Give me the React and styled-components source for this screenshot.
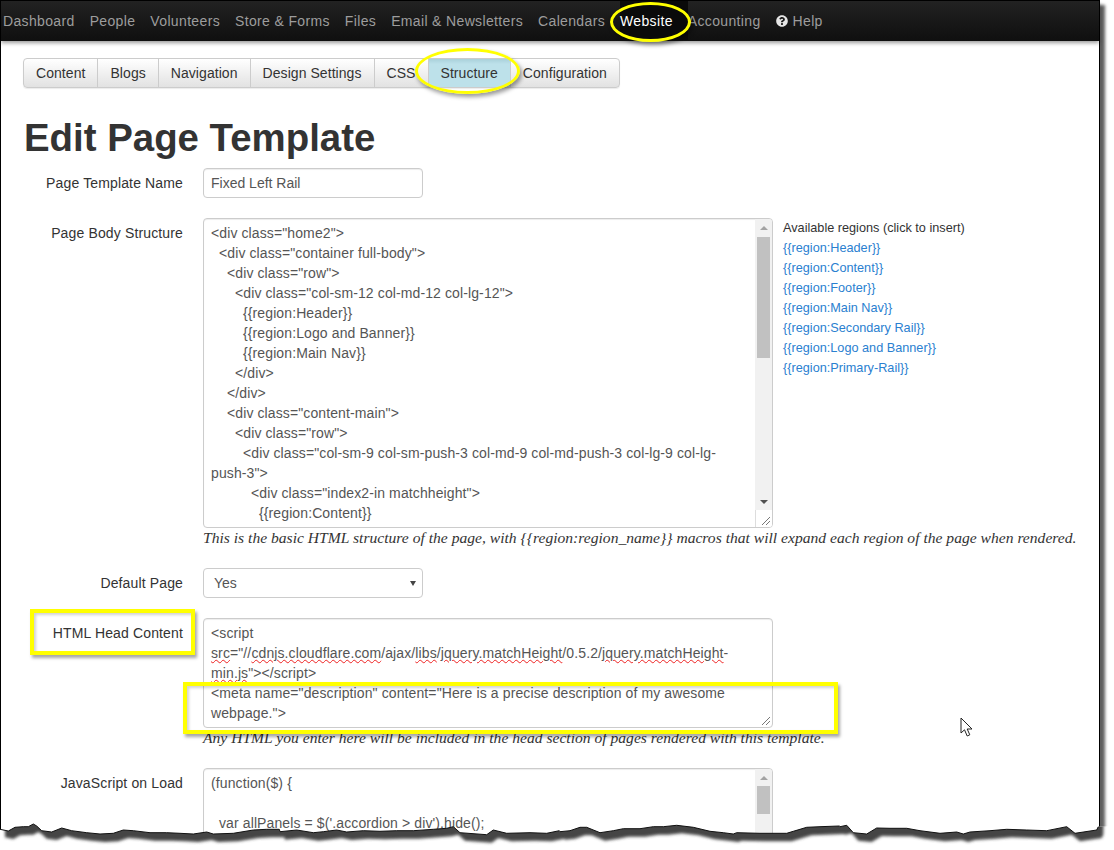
import React from "react";
import styled, { createGlobalStyle } from "styled-components";
import { FaQuestionCircle } from "react-icons/fa";

const Global = createGlobalStyle`
  html, body { margin: 0; padding: 0; background: #fff; }
  body { width: 1114px; height: 850px; overflow: hidden; font-family: "Liberation Sans", Arial, sans-serif; font-size: 14px; color: #333; }
  * { box-sizing: border-box; }
`;

const Page = styled.div`
  position: relative;
  width: 1114px;
  height: 850px;
  overflow: hidden;
`;
const Frame = styled.div`
  width: 1100px;
  height: 840px;
  border: 1px solid #000;
  border-bottom: 0;
  background: #fff;
  box-shadow: 5px 5px 3px #5f5f5f;
`;
const Nav = styled.nav`
  display: flex;
  align-items: stretch;
  height: 40px;
  padding: 0 0 1px 2px;
  background: linear-gradient(#222, #0f0f0f);
  box-shadow: 0 2px 4px rgba(0, 0, 0, 0.4);
`;
const NavItem = styled.a`
  display: flex;
  align-items: center;
  gap: 5px;
  margin-right: ${(p) => (p.$active ? 0 : "15px")};
  padding-right: ${(p) => (p.$active ? "15px" : 0)};
  background: ${(p) => (p.$active ? "#0a0a0a" : "transparent")};
  color: ${(p) => (p.$active ? "#fff" : "#9d9d9d")};
  font-size: 14px;
  letter-spacing: 0.35px;
  white-space: nowrap;
  svg { color: #e6e6e6; font-size: 12px; }
`;
const Main = styled.main`
  padding: 17px 0 0 22px;
`;
const Tabs = styled.div`
  display: inline-flex;
  height: 30px;
  border-radius: 4px;
  box-shadow: 0 1px 1px rgba(0, 0, 0, 0.08);
`;
const Tab = styled.a`
  display: flex;
  align-items: center;
  padding: 0 12px;
  margin-left: -1px;
  border: 1px solid #ccc;
  color: #333;
  letter-spacing: 0.06px;
  background: ${(p) => (p.$active ? "linear-gradient(#a9d0da, #bde1ea 5px)" : "linear-gradient(#fff, #e2e2e2)")};
  &:first-child { margin-left: 0; border-radius: 4px 0 0 4px; }
  &:last-child { border-radius: 0 4px 4px 0; }
`;
const Title = styled.h1`
  margin: 30px 0 10px 1px;
  font-size: 38.4px;
  line-height: 40px;
  font-weight: 700;
  color: #333;
`;
const Row = styled.div`
  display: grid;
  grid-template-columns: 160px 1fr;
  column-gap: 20px;
  margin-bottom: 20px;
`;
const Label = styled.label`
  padding-top: 5px;
  line-height: 20px;
  text-align: right;
  color: #333;
  letter-spacing: 0.14px;
`;
const Input = styled.input`
  display: block;
  width: 220px;
  height: 30px;
  padding: 0 7px;
  border: 1px solid #ccc;
  border-radius: 4px;
  font: 14px "Liberation Sans", Arial, sans-serif;
  color: #555;
  box-shadow: inset 0 1px 1px rgba(0, 0, 0, 0.075);
  outline: 0;
`;
const SelectBox = styled.div`
  display: flex;
  align-items: center;
  justify-content: space-between;
  width: 220px;
  height: 30px;
  padding: 0 6px 0 10px;
  border: 1px solid #ccc;
  border-radius: 4px;
  color: #555;
  &::after {
    content: "";
    border-left: 3px solid transparent;
    border-right: 3px solid transparent;
    border-top: 5px solid #444;
  }
`;
const EditorRow = styled.div`
  display: flex;
  gap: 10px;
`;
const Editor = styled.div`
  position: relative;
  display: flex;
  width: 570px;
  height: ${(p) => p.$h}px;
  border: 1px solid #ccc;
  border-radius: 4px;
  background: #fff;
  overflow: hidden;
  box-shadow: inset 0 1px 1px rgba(0, 0, 0, 0.075);
`;
const Code = styled.div`
  flex: 1;
  padding: 4px 0 0 7px;
  line-height: 20px;
  color: #555;
  letter-spacing: 0.11px;
  white-space: pre;
  overflow: hidden;
`;
const Sq = styled.span`
  text-decoration: underline wavy #e22;
  text-decoration-thickness: 1px;
  text-underline-offset: 1px;
`;
const ScrollBar = styled.div`
  display: flex;
  flex-direction: column;
  width: 17px;
  background: #f1f1f1;
`;
const Arrow = styled.div`
  display: flex;
  align-items: center;
  justify-content: center;
  height: 17px;
  flex: none;
  &::before {
    content: "";
    border-left: 4px solid transparent;
    border-right: 4px solid transparent;
    ${(p) => (p.$down ? "border-top: 4px solid #505050;" : "border-bottom: 4px solid #a3a3a3;")}
  }
`;
const Track = styled.div`
  flex: 1;
  padding: 0 2px;
`;
const Thumb = styled.div`
  height: ${(p) => p.$h}px;
  background: #c1c1c1;
`;
const Corner = styled.div`
  flex: none;
  height: 17px;
  background: #fff;
  border-left: 1px solid #ddd;
`;
const Grip = styled.svg`
  position: absolute;
  right: 1px;
  bottom: 1px;
  width: 10px;
  height: 10px;
`;
const Help = styled.p`
  margin: 0;
  line-height: 20px;
  font-family: "Liberation Serif", serif;
  font-style: italic;
  font-size: 15.6px;
  color: #333;
  white-space: nowrap;
`;
const Regions = styled.div`
  font-size: 12.7px;
  line-height: 20px;
  color: #333;
`;
const RegionLink = styled.a`
  display: block;
  color: #2a80d0;
`;
const Ring = styled.div`
  position: absolute;
  left: ${(p) => p.$x}px;
  top: ${(p) => p.$y}px;
  width: ${(p) => p.$w}px;
  height: ${(p) => p.$h}px;
  border: 3px solid #ffff00;
  border-radius: 50%;
  box-shadow: 2px 3px 4px rgba(0, 0, 0, 0.4);
`;
const Mark = styled.div`
  position: absolute;
  left: ${(p) => p.$x}px;
  top: ${(p) => p.$y}px;
  width: ${(p) => p.$w}px;
  height: ${(p) => p.$h}px;
  border: 4px solid #ffff00;
  box-shadow: 2px 3px 3px rgba(0, 0, 0, 0.35), inset 2px 2px 3px rgba(0, 0, 0, 0.18);
`;
const Cursor = styled.svg`
  position: absolute;
  left: 960px;
  top: 717px;
  width: 14px;
  height: 21px;
`;
const TornEdge = styled.svg`
  position: absolute;
  left: 0;
  top: 810px;
  width: 1114px;
  height: 40px;
`;

const navItems = ["Dashboard", "People", "Volunteers", "Store & Forms", "Files", "Email & Newsletters", "Calendars", "Website", "Accounting"];
const tabs = ["Content", "Blogs", "Navigation", "Design Settings", "CSS", "Structure", "Configuration"];
const regions = ["Header", "Content", "Footer", "Main Nav", "Secondary Rail", "Logo and Banner", "Primary-Rail"];

const bodyCode = `<div class="home2">
  <div class="container full-body">
    <div class="row">
      <div class="col-sm-12 col-md-12 col-lg-12">
        {{region:Header}}
        {{region:Logo and Banner}}
        {{region:Main Nav}}
      </div>
    </div>
    <div class="content-main">
      <div class="row">
        <div class="col-sm-9 col-sm-push-3 col-md-9 col-md-push-3 col-lg-9 col-lg-
push-3">
          <div class="index2-in matchheight">
            {{region:Content}}`;

const segs = [
  [0, [0,58, 25,63, 45,52, 70,50, 85,50, 100,42, 110,48, 125,62, 155,66, 185,54, 215,62, 260,68, 300,72, 340,70, 370,60, 400,62, 450,68, 500,68, 540,70, 580,72, 620,66, 640,72, 700,70, 760,60, 800,58, 838,58]],
  [280, [0,65, 50,60, 100,68, 130,65, 170,60, 200,66, 250,62, 300,64, 350,62, 400,62, 460,58, 500,55, 520,50, 540,68, 620,74, 640,60, 680,70, 750,68, 800,70, 838,62]],
  [560, [0,65, 30,62, 60,52, 80,52, 120,68, 160,62, 190,56, 240,56, 280,50, 310,50, 350,46, 400,52, 450,64, 490,68, 520,72, 530,68, 600,70, 680,70, 700,64, 740,52, 780,50, 838,48]],
  [840, [0,50, 20,46, 40,68, 80,72, 110,54, 150,55, 200,55, 240,62, 300,70, 350,66, 370,72, 390,66, 450,62, 500,58, 560,60, 620,62, 680,50, 705,70, 770,60, 775,50]],
];
const jag = segs.flatMap(([ox, a]) => {
  const out = [];
  for (let i = 0; i < a.length; i += 2) out.push([ox + a[i] / 3, 810 + a[i + 1] / 3]);
  return out;
});
const jagStr = jag.map((p) => p.map((n) => n.toFixed(1)).join(",")).join(" ");
const belowJag = `0,850 ${jagStr} 1114,826 1114,850`;
const pageShadow = `0,790 1099,790 ${[...jag].reverse().map(([x, y]) => `${x.toFixed(1)},${y.toFixed(1)}`).join(" ")}`;

function Bar({ thumb, gap }) {
  return (
    <ScrollBar>
      <Arrow />
      <Track style={{ paddingTop: gap }}>
        <Thumb $h={thumb} />
      </Track>
      <Arrow $down />
      <Corner />
    </ScrollBar>
  );
}
const GripMark = () => (
  <Grip viewBox="0 0 10 10">
    <path d="M1 9 L9 1 M5 9 L9 5" stroke="#777" strokeWidth="1" fill="none" />
  </Grip>
);

export default function App() {
  return (
    <Page>
      <Global />
      <Frame>
        <Nav>
          {navItems.map((n) => (
            <NavItem key={n} $active={n === "Website"}>{n}</NavItem>
          ))}
          <NavItem><FaQuestionCircle />Help</NavItem>
        </Nav>
        <Main>
          <Tabs>
            {tabs.map((t) => (
              <Tab key={t} $active={t === "Structure"}>{t}</Tab>
            ))}
          </Tabs>
          <Title>Edit Page Template</Title>
          <Row>
            <Label>Page Template Name</Label>
            <Input readOnly value="Fixed Left Rail" />
          </Row>
          <Row>
            <Label>Page Body Structure</Label>
            <div>
              <EditorRow>
                <Editor $h={310}>
                  <Code>{bodyCode}</Code>
                  <Bar thumb={121} gap={1} />
                  <GripMark />
                </Editor>
                <Regions>
                  Available regions (click to insert)
                  {regions.map((r) => (
                    <RegionLink key={r}>{`{{region:${r}}}`}</RegionLink>
                  ))}
                </Regions>
              </EditorRow>
              <Help>{"This is the basic HTML structure of the page, with {{region:region_name}} macros that will expand each region of the page when rendered."}</Help>
            </div>
          </Row>
          <Row>
            <Label>Default Page</Label>
            <SelectBox>Yes</SelectBox>
          </Row>
          <Row>
            <Label>HTML Head Content</Label>
            <div>
              <Editor $h={110}>
                <Code>
                  {"<script\n"}
                  <Sq>src</Sq>{'="//'}<Sq>cdnjs.cloudflare.com</Sq>{"/ajax/"}<Sq>libs</Sq>{"/"}<Sq>jquery.matchHeight</Sq>{"/0.5.2/"}<Sq>jquery.matchHeight</Sq>{"-\n"}
                  <Sq>min.js</Sq>{'"></script>\n'}
                  {'<meta name="description" content="Here is a precise description of my awesome\nwebpage.">'}
                </Code>
                <GripMark />
              </Editor>
              <Help>Any HTML you enter here will be included in the head section of pages rendered with this template.</Help>
            </div>
          </Row>
          <Row>
            <Label>JavaScript on Load</Label>
            <Editor $h={200}>
              <Code>{"(function($) {\n\n  var allPanels = $('.accordion > div').hide();"}</Code>
              <Bar thumb={28} gap={0} />
            </Editor>
          </Row>
        </Main>
      </Frame>

      <Ring $x={610} $y={2} $w={81} $h={40} />
      <Ring $x={415} $y={48} $w={105} $h={46} />
      <Mark $x={30} $y={609} $w={165} $h={46} />
      <Mark $x={183} $y={682} $w={655} $h={52} />

      <Cursor viewBox="0 0 14 21">
        <path d="M1 1 L1 16 L4.5 12.8 L7.2 19 L9.8 17.8 L7.2 12 L12 12 Z" fill="#fff" stroke="#222" strokeWidth="1" />
      </Cursor>

      <TornEdge viewBox="0 810 1114 40">
        <defs>
          <clipPath id="below"><polygon points={belowJag} /></clipPath>
          <filter id="soft" x="-5%" y="-50%" width="110%" height="200%">
            <feGaussianBlur stdDeviation="1.6" />
          </filter>
        </defs>
        <polygon points={belowJag} fill="#fff" />
        <g clipPath="url(#below)">
          <polygon points={pageShadow} fill="#444" filter="url(#soft)" transform="translate(5 8)" />
        </g>
        <polyline points={jagStr} fill="none" stroke="#111" strokeWidth="1" />
      </TornEdge>
    </Page>
  );
}
